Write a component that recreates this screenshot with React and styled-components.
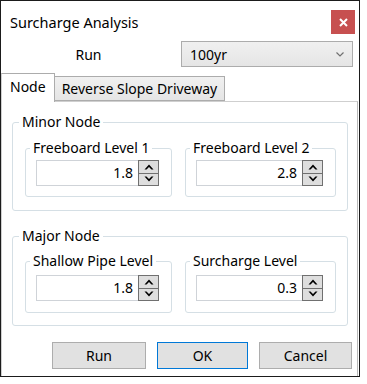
import React from 'react';
import styled, { createGlobalStyle } from 'styled-components';

const Global = createGlobalStyle`
  body {
    margin: 0;
    background: #ffffff;
    font-family: "Noto Sans", "Open Sans", sans-serif;
    color: #000000;
  }
`;

const Window = styled.div`
  width: 358px;
  height: 375px;
  border: 1px solid #1b1b1b;
  background: #ffffff;
  display: flex;
  flex-direction: column;
`;

const TitleBar = styled.div`
  display: flex;
  justify-content: space-between;
  align-items: flex-start;
  height: 42px;
  padding: 9px 4px 0 9px;
  box-sizing: border-box;
`;

const Title = styled.div`
  font-size: 14.5px;
  line-height: 24px;
`;

const CloseButton = styled.button`
  width: 24px;
  height: 24px;
  border: none;
  padding: 0;
  background: #c75050;
  display: flex;
  align-items: center;
  justify-content: center;
`;

const RunRow = styled.div`
  display: grid;
  grid-template-columns: 180px 172px;
  align-items: center;
  height: 26px;
  margin-top: 1px;
`;

const RunLabel = styled.div`
  font-size: 14px;
  text-align: center;
  padding-right: 5px;
`;

const Combo = styled.div`
  height: 26px;
  box-sizing: border-box;
  border: 1px solid #acacac;
  background: linear-gradient(#f0f0f0, #e5e5e5);
  display: flex;
  align-items: center;
  justify-content: space-between;
  padding: 0 8px 0 8px;
  font-size: 14px;
`;

const Tabs = styled.div`
  display: flex;
  align-items: flex-end;
  margin-top: 6px;
  height: 28px;
  position: relative;
  z-index: 1;
`;

const Tab = styled.div`
  box-sizing: border-box;
  height: ${p => (p.$active ? '29px' : '25px')};
  margin-bottom: ${p => (p.$active ? '-1px' : '0')};
  padding: 0 ${p => (p.$active ? '8px' : '7px')};
  border: 1px solid #acacac;
  border-bottom: ${p => (p.$active ? 'none' : '1px solid #acacac')};
  border-left: ${p => (p.$active ? '1px solid #d0d0d0' : 'none')};
  background: ${p => (p.$active ? '#ffffff' : 'linear-gradient(#f0f0f0, #e5e5e5)')};
  font-size: 14px;
  line-height: ${p => (p.$active ? '26px' : '23px')};
  white-space: nowrap;
`;

const Panel = styled.div`
  flex: 1;
  margin-right: 1px;
  border: 1px solid #cfcfcf;
  border-right-color: #b9b9b9;
  border-bottom: none;
  padding: 11px 9px 0 10px;
  display: flex;
  flex-direction: column;
`;

const Group = styled.fieldset`
  margin: 0;
  border: 1px solid #d5dfe5;
  border-radius: 3px;
  padding: ${p => p.$pad || '8px 12px 13px 12px'};
  min-width: 0;
  & + & {
    margin-top: 16px;
  }
`;

const Legend = styled.legend`
  font-size: 14px;
  line-height: 18px;
  padding: 0 3px;
  margin-left: -6px;
`;

const Pair = styled.div`
  display: grid;
  grid-template-columns: 147px 151px;
  column-gap: 13px;
`;

const Field = styled.fieldset`
  margin: 0;
  border: 1px solid #d5dfe5;
  border-radius: 3px;
  padding: ${p => p.$pad || '3px 12px 10px 10px'};
  min-width: 0;
`;

const Spin = styled.div`
  display: flex;
  height: 26px;
`;

const NumBox = styled.div`
  flex: 1;
  box-sizing: border-box;
  border: 1px solid #cfd3d8;
  border-right: none;
  font-size: 14px;
  line-height: 24px;
  text-align: right;
  padding-right: 5px;
`;

const SpinButtons = styled.div`
  width: 21px;
  display: flex;
  flex-direction: column;
`;

const SpinButton = styled.div`
  flex: 1;
  box-sizing: border-box;
  border: 1px solid #707070;
  border-top: ${p => (p.$down ? 'none' : '1px solid #707070')};
  background: #dedede;
  display: flex;
  align-items: center;
  justify-content: center;
`;

const ButtonRow = styled.div`
  display: flex;
  justify-content: flex-end;
  gap: 11px;
  margin-right: -4px;
  padding: 16px 0 7px 0;
`;

const Button = styled.button`
  width: ${p => p.$w || 93}px;
  height: 27px;
  box-sizing: border-box;
  border: 1px solid ${p => (p.$default ? '#0078d7' : '#adadad')};
  background: #e1e1e1;
  font-family: inherit;
  font-size: 14px;
  color: #000000;
  padding: 0;
`;

const Arrow = ({ down }) => (
  <svg width="10" height="6" viewBox="0 0 10 6">
    <path
      d={down ? 'M0.5 0.5 L5 5.5 L9.5 0.5 L7.5 0.5 L5 3 L2.5 0.5 Z' : 'M0.5 5.5 L5 0.5 L9.5 5.5 L7.5 5.5 L5 3 L2.5 5.5 Z'}
      fill="#000"
    />
  </svg>
);

const Spinner = ({ value }) => (
  <Spin>
    <NumBox>{value}</NumBox>
    <SpinButtons>
      <SpinButton><Arrow /></SpinButton>
      <SpinButton $down><Arrow down /></SpinButton>
    </SpinButtons>
  </Spin>
);

const LevelField = ({ label, value, pad }) => (
  <Field $pad={pad}>
    <Legend>{label}</Legend>
    <Spinner value={value} />
  </Field>
);

export default function App() {
  return (
    <>
      <Global />
      <Window>
        <TitleBar>
          <Title>Surcharge Analysis</Title>
          <CloseButton>
            <svg width="9" height="9" viewBox="0 0 9 9">
              <path d="M1 1 L8 8 M8 1 L1 8" stroke="#fff" strokeWidth="2" />
            </svg>
          </CloseButton>
        </TitleBar>
        <RunRow>
          <RunLabel>Run</RunLabel>
          <Combo>
            <span>100yr</span>
            <svg width="8" height="5" viewBox="0 0 8 5">
              <path d="M0.5 0.5 L4 4 L7.5 0.5" fill="none" stroke="#707070" strokeWidth="1.2" />
            </svg>
          </Combo>
        </RunRow>
        <Tabs>
          <Tab $active>Node</Tab>
          <Tab>Reverse Slope Driveway</Tab>
        </Tabs>
        <Panel>
          <Group>
            <Legend>Minor Node</Legend>
            <Pair>
              <LevelField label="Freeboard Level 1" value="1.8" />
              <LevelField label="Freeboard Level 2" value="2.8" />
            </Pair>
          </Group>
          <Group $pad="7px 12px 12px 12px">
            <Legend>Major Node</Legend>
            <Pair>
              <LevelField label="Shallow Pipe Level" value="1.8" pad="5px 12px 11px 10px" />
              <LevelField label="Surcharge Level" value="0.3" pad="5px 12px 11px 10px" />
            </Pair>
          </Group>
          <ButtonRow>
            <Button $w={94}>Run</Button>
            <Button $w={91} $default>OK</Button>
            <Button>Cancel</Button>
          </ButtonRow>
        </Panel>
      </Window>
    </>
  );
}
